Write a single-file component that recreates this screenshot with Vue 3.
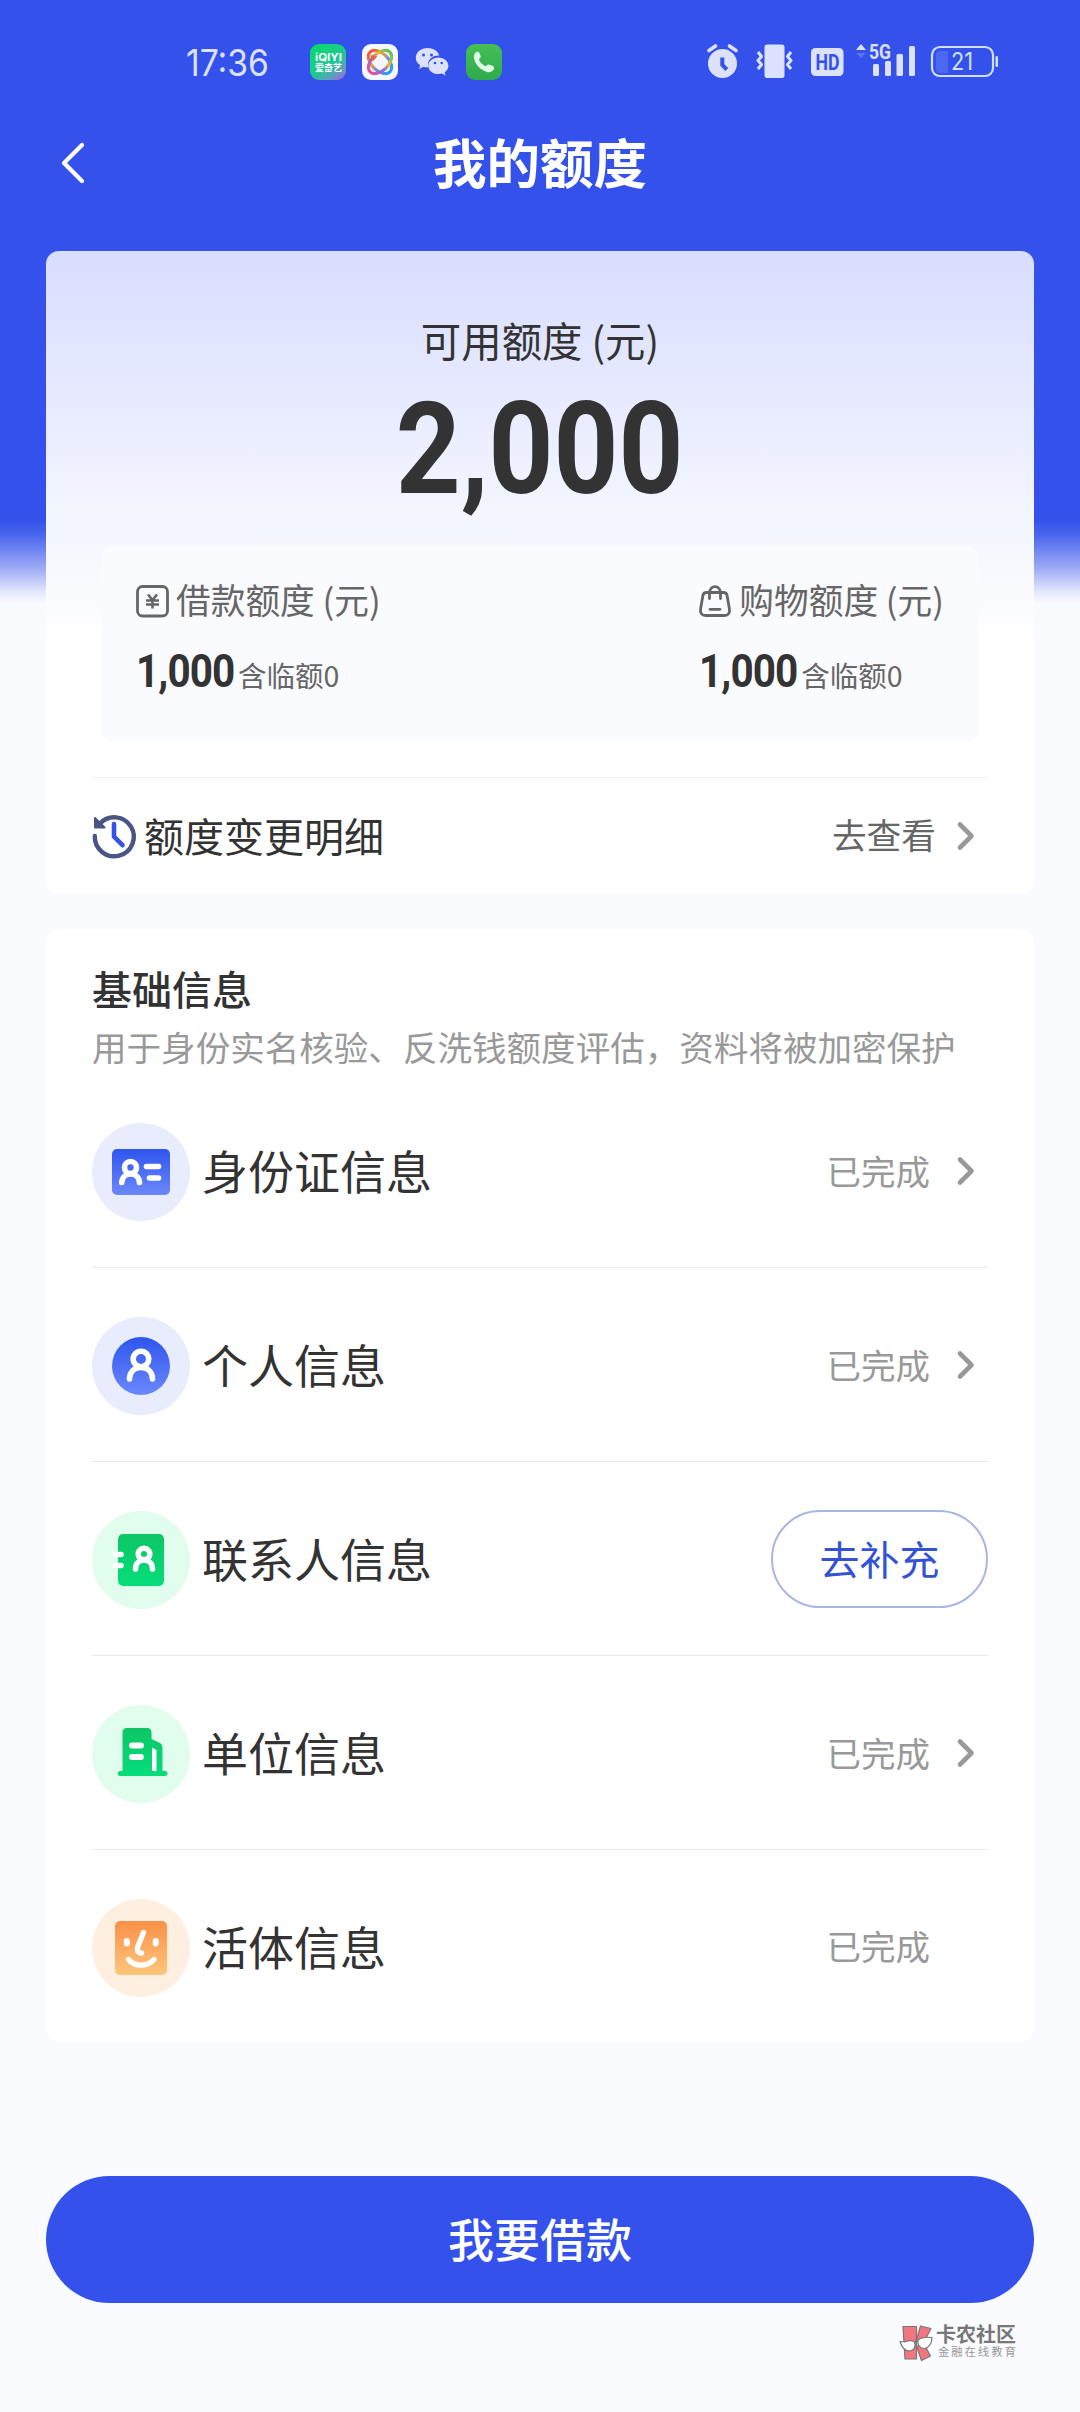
<script setup>
const quotas = [
  { key: 'loan', label: '借款额度 (元)', value: '1,000', extra: '含临额0' },
  { key: 'shop', label: '购物额度 (元)', value: '1,000', extra: '含临额0' },
]
const rows = [
  { key: 'id', name: '身份证信息', status: '已完成', arrow: true },
  { key: 'person', name: '个人信息', status: '已完成', arrow: true },
  { key: 'contact', name: '联系人信息', action: '去补充' },
  { key: 'company', name: '单位信息', status: '已完成', arrow: true },
  { key: 'face', name: '活体信息', status: '已完成', arrow: false },
]
</script>

<template>
  <div class="page">
    <div class="status">
      <svg class="time" width="84" height="48" viewBox="0 -6 84 48">
        <text x="0" y="31.5" textLength="83" lengthAdjust="spacingAndGlyphs">17:36</text>
      </svg>
      <div class="apps">
        <svg width="36" height="36" viewBox="0 0 36 36">
          <defs>
            <linearGradient id="qy" x1="0.2" y1="0" x2="0.9" y2="1">
              <stop offset="0" stop-color="#08d968" /><stop offset=".55" stop-color="#1fc795" />
              <stop offset=".8" stop-color="#5c9fbd" /><stop offset="1" stop-color="#a860e0" />
            </linearGradient>
          </defs>
          <rect width="36" height="36" rx="9" fill="url(#qy)" />
          <text class="qy-en" x="5" y="17" textLength="27" lengthAdjust="spacingAndGlyphs">iQIYI</text>
          <text class="qy-cn" x="5" y="27.3" textLength="27" lengthAdjust="spacingAndGlyphs">爱奇艺</text>
        </svg>
        <svg width="36" height="36" viewBox="0 0 36 36">
          <defs>
            <linearGradient id="pa" x1="0" y1="0" x2="1" y2="0">
              <stop offset="0" stop-color="#ef5a3c" /><stop offset=".35" stop-color="#f0a03a" />
              <stop offset=".65" stop-color="#5a8ee8" /><stop offset="1" stop-color="#2fa0ea" />
            </linearGradient>
            <linearGradient id="pb" x1="0" y1="0" x2="1" y2="0">
              <stop offset="0" stop-color="#e0559c" /><stop offset=".4" stop-color="#8a6ce0" />
              <stop offset=".65" stop-color="#e8b83a" /><stop offset="1" stop-color="#5cc558" />
            </linearGradient>
          </defs>
          <rect width="36" height="36" rx="9" fill="#f7f8ff" />
          <g fill="none" stroke-width="3.200">
            <ellipse cx="18" cy="18" rx="14" ry="8.500" stroke="url(#pa)" transform="rotate(45 18 18)" />
            <ellipse cx="18" cy="18" rx="14" ry="8.500" stroke="url(#pb)" transform="rotate(-45 18 18)" />
          </g>
          <path d="M8.500 11l7 1.500-5 5z" fill="#e7653a" />
        </svg>
        <svg width="36" height="36" viewBox="0 0 36 36">
          <path fill="#dbe1ff" d="M13.500 4C7 4 1.800 8.300 1.800 13.700c0 3 1.700 5.700 4.400 7.500L5 25l4.400-2.300c1.200.4 2.600.6 4 .6h1C12.500 16 18 11.200 25.200 11.400 23.900 7 19.100 4 13.500 4z" />
          <path fill="#dbe1ff" d="M24.300 13.500c-5.600 0-10 3.700-10 8.300s4.400 8.300 10 8.300c1.300 0 2.500-.2 3.600-.5l3.700 2-1-3.200c2.300-1.500 3.800-3.900 3.800-6.600 0-4.600-4.500-8.300-10.100-8.300z" />
          <g fill="#3452eb"><circle cx="9.500" cy="11" r="1.500" /><circle cx="17.500" cy="11" r="1.500" /><circle cx="21" cy="19" r="1.300" /><circle cx="27.700" cy="19" r="1.300" /></g>
        </svg>
        <svg width="36" height="36" viewBox="0 0 36 36">
          <defs><linearGradient id="ph" x1="0" y1="0" x2="0" y2="1"><stop offset="0" stop-color="#44c056" /><stop offset="1" stop-color="#2faa4c" /></linearGradient></defs>
          <rect width="36" height="36" rx="9" fill="url(#ph)" />
          <path fill="#e0fbe8" d="M10 8.200c1.300-.9 3-.3 3.600 1.100l.9 2.500c.4 1.200 0 2.200-1.100 3-.5.400-.5.900-.2 1.500 1.300 2.400 3.200 4.300 5.700 5.700.600.300 1 .200 1.400-.2.900-1.200 1.900-1.500 3.200-1.100l3 1c1.600.6 2.200 2.600 1.100 4-1.600 2-4.100 2.900-6.700 2.200C14.300 26 9.500 21 8 14.300c-.5-2.400 0-4.800 2-6.100z" />
        </svg>
      </div>
      <div class="sys">
        <svg width="31" height="36" viewBox="0 0 31 36" fill="none">
          <circle cx="15.500" cy="19.500" r="14.500" fill="#dbe1ff" />
          <path d="M2 7l7-5.500M29 7l-7-5.500" stroke="#3452eb" stroke-width="7" />
          <path d="M2 6.500l6.500-4.500M29 6.500l-6.500-4.500" stroke="#dbe1ff" stroke-width="3.600" stroke-linecap="round" />
          <path d="M15.300 13.500v7.500l4.500 4.500" stroke="#3452eb" stroke-width="4" />
        </svg>
        <svg width="37" height="36" viewBox="0 0 37 36" fill="none">
          <rect x="8.500" y="0.500" width="20" height="33.500" rx="2.800" fill="#dbe1ff" />
          <path d="M2 8l3.500 4.500-3.500 4 3.500 4-3.500 4.500M35 8l-3.500 4.500 3.500 4-3.500 4 3.500 4.500" stroke="#dbe1ff" stroke-width="3" stroke-linejoin="round" />
        </svg>
        <svg width="33" height="36" viewBox="0 0 33 36">
          <rect y="4" width="32.500" height="28" rx="4.500" fill="#dbe1ff" />
          <text class="hd" x="4.500" y="26" textLength="24" lengthAdjust="spacingAndGlyphs">HD</text>
        </svg>
        <svg class="signal" width="60" height="44" viewBox="0 -8 60 44">
          <path d="M5 0l5 6H0z" fill="#dbe1ff" /><path d="M5 14l5-5H0z" fill="#5874f3" />
          <text class="g5" x="13" y="15" textLength="22" lengthAdjust="spacingAndGlyphs">5G</text>
          <g fill="#dbe1ff"><rect x="17" y="20" width="6" height="12" rx="1.500" /><rect x="29" y="17" width="6" height="15" rx="1.500" /><rect x="40.500" y="10" width="6.500" height="22" rx="1.500" /><rect x="53" y="2" width="6" height="30" rx="1.500" /></g>
        </svg>
        <svg width="68" height="36" viewBox="0 0 68 36" fill="none">
          <rect x="1" y="3" width="61" height="29" rx="8" stroke="#cfe0fa" stroke-width="2.200" />
          <path d="M9 7h8v22H9a4 4 0 0 1-4-4V11a4 4 0 0 1 4-4z" fill="#4c68f1" />
          <rect x="64.500" y="12" width="2.500" height="11" rx="1.200" fill="#cfe0fa" />
          <text class="bat" x="20" y="26" textLength="22" lengthAdjust="spacingAndGlyphs">21</text>
        </svg>
      </div>
    </div>

    <header class="nav">
      <svg class="back" width="28" height="46" viewBox="0 0 28 46" fill="none">
        <path d="M23 5L5 23 23 41" stroke="#fff" stroke-width="4.200" stroke-linecap="round" stroke-linejoin="round" />
      </svg>
      <h1>我的额度</h1>
    </header>

    <section class="card quota">
      <div class="q-label">可用额度 (元)</div>
      <div class="q-total"><span>2,000</span></div>
      <div class="split">
        <div v-for="q in quotas" :key="q.key" class="part">
          <div class="part-label">
            <svg v-if="q.key === 'loan'" width="33" height="33" viewBox="0 0 33 33" fill="none" stroke="#666">
              <rect x="1.500" y="1.500" width="30" height="29.500" rx="5" stroke-width="2.800" />
              <path d="M12 9.500l4.500 5.500 4.500-5.500M10 15.500h13M10 19.500h13M16.500 15v8.500" stroke-width="2.600" />
            </svg>
            <svg v-else width="33" height="33" viewBox="0 0 33 33" fill="none" stroke="#666" stroke-width="2.800" stroke-linecap="round">
              <path d="M7.500 7.500h17c2 0 3.200 1 3.600 3l2.300 13.500c.7 4-1 6.500-5 6.500H6.600c-4 0-5.700-2.500-5-6.500L3.900 10.500c.4-2 1.600-3 3.600-3z" />
              <path d="M10.500 13.500V8.500C10.500 4 13 1.600 16 1.600s5.500 2.400 5.500 6.900v5M11 24.300h10" />
            </svg>
            <span>{{ q.label }}</span>
          </div>
          <div class="part-value">
            <span class="num"><b>{{ q.value }}</b></span><span class="extra">{{ q.extra }}</span>
          </div>
        </div>
      </div>
      <div class="change">
        <svg width="44" height="44" viewBox="0 0 44 44" fill="none">
          <path d="M7.800 9.700A19.500 19.500 0 1 1 2.800 22" stroke="#4a5585" stroke-width="4.400" stroke-linecap="round" />
          <path d="M3 4v9.500h9.500z" fill="#4a5585" stroke="#4a5585" stroke-width="2" stroke-linejoin="round" />
          <path d="M22 10v12.700l8.500 8.500" stroke="#3452eb" stroke-width="4.600" stroke-linecap="round" stroke-linejoin="round" />
        </svg>
        <span class="change-name">额度变更明细</span>
        <span class="look">去查看</span>
        <svg class="chev" width="20" height="32" viewBox="0 0 20 32" fill="none"><path d="M4 4.500L15.500 16 4 27.500" stroke="#999" stroke-width="4.600" stroke-linecap="round" stroke-linejoin="round" /></svg>
      </div>
    </section>

    <section class="card info">
      <h2>基础信息</h2>
      <p class="desc">用于身份实名核验、反洗钱额度评估，资料将被加密保护</p>
      <div v-for="r in rows" :key="r.key" class="row">
        <svg class="badge" width="98" height="98" viewBox="0 0 98 98" fill="none">
          <defs>
            <linearGradient id="blue" x1="0" y1="0" x2="0" y2="1"><stop offset="0" stop-color="#2f55ee" /><stop offset="1" stop-color="#6b88fb" /></linearGradient>
            <linearGradient id="green" x1="0" y1="0" x2="0" y2="1"><stop offset="0" stop-color="#0cc566" /><stop offset="1" stop-color="#06de7a" /></linearGradient>
            <linearGradient id="orange" x1="0" y1="0" x2="0" y2="1"><stop offset="0" stop-color="#fb9147" /><stop offset="1" stop-color="#fdc67c" /></linearGradient>
          </defs>
          <template v-if="r.key === 'id'">
            <circle cx="49" cy="49" r="49" fill="#e9ecfd" />
            <rect x="20" y="26" width="58" height="46" rx="5" fill="url(#blue)" />
            <g stroke="#fff" stroke-width="5.600" stroke-linecap="round">
              <circle cx="38.500" cy="44.500" r="6" /><path d="M29.800 59.500c.5-11.500 17-11.500 17.700 0M54.500 43.500h12M57.500 55h9" />
            </g>
          </template>
          <template v-else-if="r.key === 'person'">
            <circle cx="49" cy="49" r="49" fill="#e9ecfd" />
            <circle cx="49" cy="49" r="29" fill="url(#blue)" />
            <g stroke="#fff" stroke-width="5.600" stroke-linecap="round"><circle cx="49" cy="42" r="7.800" /><path d="M37.500 62c0-15.500 23-15.500 23 0" /></g>
          </template>
          <template v-else-if="r.key === 'contact'">
            <circle cx="49" cy="49" r="49" fill="#e0fdee" />
            <rect x="26" y="23" width="46" height="52" rx="5" fill="url(#green)" />
            <g stroke="#fff" stroke-width="5.600" stroke-linecap="round"><path d="M23 43.500h6M23 54.500h6" /><circle cx="52" cy="43" r="5.800" /><path d="M43.500 58c0-12 17-12 17 0" /></g>
          </template>
          <template v-else-if="r.key === 'company'">
            <circle cx="49" cy="49" r="49" fill="#e0fdee" />
            <path d="M35 23h20c3 0 4.500 1.500 4.500 4.500V34l7.500 3.500c2.500 1.200 3.500 3 3.500 5.500v23h2c4 0 4 5 0 5H28c-3 0-3-5 0-5h2.500V27.500c0-3 1.500-4.500 4.500-4.500z" fill="url(#green)" />
            <path d="M60 42.500l4.500 2.500v21H60z" fill="#fff" />
            <path d="M40 40.500h9M40 52h9" stroke="#fff" stroke-width="5.800" stroke-linecap="round" />
          </template>
          <template v-else>
            <circle cx="49" cy="49" r="49" fill="#feefe0" />
            <rect x="23" y="22" width="52" height="54" rx="5" fill="url(#orange)" />
            <g stroke="#fff" stroke-width="5.400" stroke-linecap="round" stroke-linejoin="round">
              <path d="M34.800 42v2.500M63.700 42v2.500" stroke-width="6" /><path d="M51.500 33.500l-5.500 13.500c-1.500 4.500-.5 7 3.500 7M36.500 60.500c6 7.500 19 7.500 25.500 0" />
            </g>
          </template>
        </svg>
        <span class="name">{{ r.name }}</span>
        <button v-if="r.action" class="pill">{{ r.action }}</button>
        <template v-else>
          <span class="state">{{ r.status }}</span>
          <svg class="chev" width="20" height="32" viewBox="0 0 20 32" fill="none"><path v-if="r.arrow" d="M4 4.500L15.500 16 4 27.500" stroke="#999" stroke-width="4.600" stroke-linecap="round" stroke-linejoin="round" /></svg>
        </template>
      </div>
    </section>

    <button class="borrow">我要借款</button>

    <footer class="mark">
      <svg width="34" height="37" viewBox="0 0 34 37" stroke="#777" stroke-width="1.200" stroke-linejoin="round">
        <path d="M4 1.500h13.500V34H6z" fill="#f27580" />
        <path d="M21.500 1l10.500 2.500L25 17l-7.500-2zM17.500 21l8-1 6 11-9 4.500z" fill="#f27580" />
        <path d="M1 16.500l5 .5c4-2 8-1.500 9.500 0 2 5-1 9-5 9S3 23 1 16.500zM19 15c4-3 10-3 14-2.500 0 6-3.500 11-8 11s-7-4-6-8.500z" fill="#fff" />
        <path d="M15.500 17l3.500-1.500" />
      </svg>
      <div class="mark-text">
        <strong>卡农社区</strong>
        <small>金融在线教育</small>
      </div>
    </footer>
  </div>
</template>

<style>
body { margin: 0; background: #fafbff; }
</style>

<style scoped>
.page {
  width: 1080px;
  height: 2412px;
  box-sizing: border-box;
  overflow: hidden;
  display: flex;
  flex-direction: column;
  padding: 0 46px;
  background: linear-gradient(180deg, #3452eb 0, #3452eb 520px, #4a65ed 535px, #a2aef5 570px, #e4e8fc 592px, #fafbff 604px);
  font-family: "Noto Sans CJK SC", "Noto Sans", sans-serif;
  color: #333;
}
svg { display: block; flex: none; overflow: visible; }
button { font-family: inherit; padding: 0; }
h1, h2, p { margin: 0; }

.status { height: 110px; display: flex; align-items: flex-start; padding: 44px 35px 0 140px; box-sizing: border-box; }
.time { margin-top: -6px; }
.time text { font: 400 37px Inter, sans-serif; fill: #dbe1ff; }
.apps { display: flex; gap: 16px; margin-left: 40px; }
.sys { display: flex; margin-left: auto; }
.sys svg + svg { margin-left: 18px; }
.sys .signal { margin: -8px 0 0; }
.sys svg + .signal { margin-left: 12px; }
.sys .signal + svg { margin-left: 15px; }
.qy-en { font: 700 10px Inter, sans-serif; fill: #fff; }
.qy-cn { font: 700 9.5px "Noto Sans CJK SC", sans-serif; fill: #fff; }
.hd { font: 700 22px Roboto, sans-serif; fill: #3452eb; }
.g5 { font: 700 21px Roboto, sans-serif; fill: #dbe1ff; }
.bat { font: 400 24px Inter, sans-serif; fill: #cfe0fa; }

.nav { height: 141px; display: grid; grid-template-columns: 60px 1fr 60px; align-items: start; }
.back { margin: 30px 0 0 13px; }
h1 { font-size: 53.5px; line-height: 72px; font-weight: 700; color: #fff; text-align: center; margin-top: 15px; }

.card { background: #fff; border-radius: 13px; padding: 0 46px; box-sizing: border-box; flex: none; }
.quota { height: 643px; background: linear-gradient(180deg, #d9deff 0, #e3e7ff 110px, #f3f5ff 260px, #fafbff 345px, #fff 395px); display: flex; flex-direction: column; padding-top: 61px; }
.q-label { font-size: 40.4px; line-height: 56px; text-align: center; }
.q-total { margin-top: 1px; height: 160px; display: flex; justify-content: center; align-items: center; font: 700 128px/160px Roboto, sans-serif; }
.q-total span { transform: scaleX(.885); }
.split { margin: 17px 9px 0; height: 195px; box-sizing: border-box; border-radius: 12px; background: #fafbff; padding: 30px 35px 0 35px; display: flex; justify-content: space-between; }
.part-label { display: flex; align-items: center; height: 46px; gap: 7px; font-size: 34.7px; color: #666; line-height: 46px; }
.part-label svg { position: relative; top: 2px; }
.part-value { display: flex; align-items: baseline; height: 60px; line-height: 60px; margin-top: 19px; }
.num { width: 102px; font-family: Roboto, sans-serif; font-size: 46px; }
.num b { display: inline-block; letter-spacing: -1px; transform: scaleX(.88); transform-origin: 0 50%; }
.extra { font-size: 28.5px; color: #666; }
.change { margin-top: 36px; border-top: 1px solid #ececef; flex: 1; display: flex; align-items: center; }
.change-name { margin-left: 8px; font-size: 40px; flex: 1; padding-bottom: 3px; }
.look { font-size: 34.7px; color: #666; margin-right: 20px; padding-bottom: 4px; }
.chev { margin-right: 12px; }

.info { margin-top: 35px; height: 1113px; padding-top: 31px; }
h2 { font-size: 40px; line-height: 56px; font-weight: 500; }
.desc { margin-top: 6px; font-size: 34.55px; line-height: 48px; color: #999; white-space: nowrap; }
.desc + .row { margin-top: 4px; }
.row { height: 194px; box-sizing: border-box; padding-top: 3px; border-bottom: 1px solid #e9e9ec; display: flex; align-items: center; }
.row:last-child { border-bottom-color: transparent; height: 193px; }
.row .chev { margin-bottom: 2px; }
.name { margin-left: 12px; font-size: 46px; flex: 1; padding-bottom: 6px; }
.state { font-size: 34.5px; color: #999; margin-right: 26px; padding-bottom: 5px; }
.pill { width: 217px; height: 98px; margin-bottom: 3px; box-sizing: border-box; border: 2px solid #aab6e2; border-radius: 49px; background: #fff; color: #3452d6; font-size: 40px; padding-bottom: 2px; }

.borrow { margin-top: 134px; height: 127px; flex: none; border: 0; border-radius: 64px; background: #3452eb; color: #fff; font-size: 46px; font-weight: 500; padding-bottom: 5px; }

.mark { display: flex; align-self: flex-end; margin: 22px 17px 0 0; gap: 3px; }
.mark-text { display: flex; flex-direction: column; width: 81px; white-space: nowrap; }
.mark strong { font-size: 20px; line-height: 18px; color: #777; }
.mark small { font-size: 11.4px; line-height: 17px; letter-spacing: 1.9px; margin-left: 2px; color: #999; }
</style>
